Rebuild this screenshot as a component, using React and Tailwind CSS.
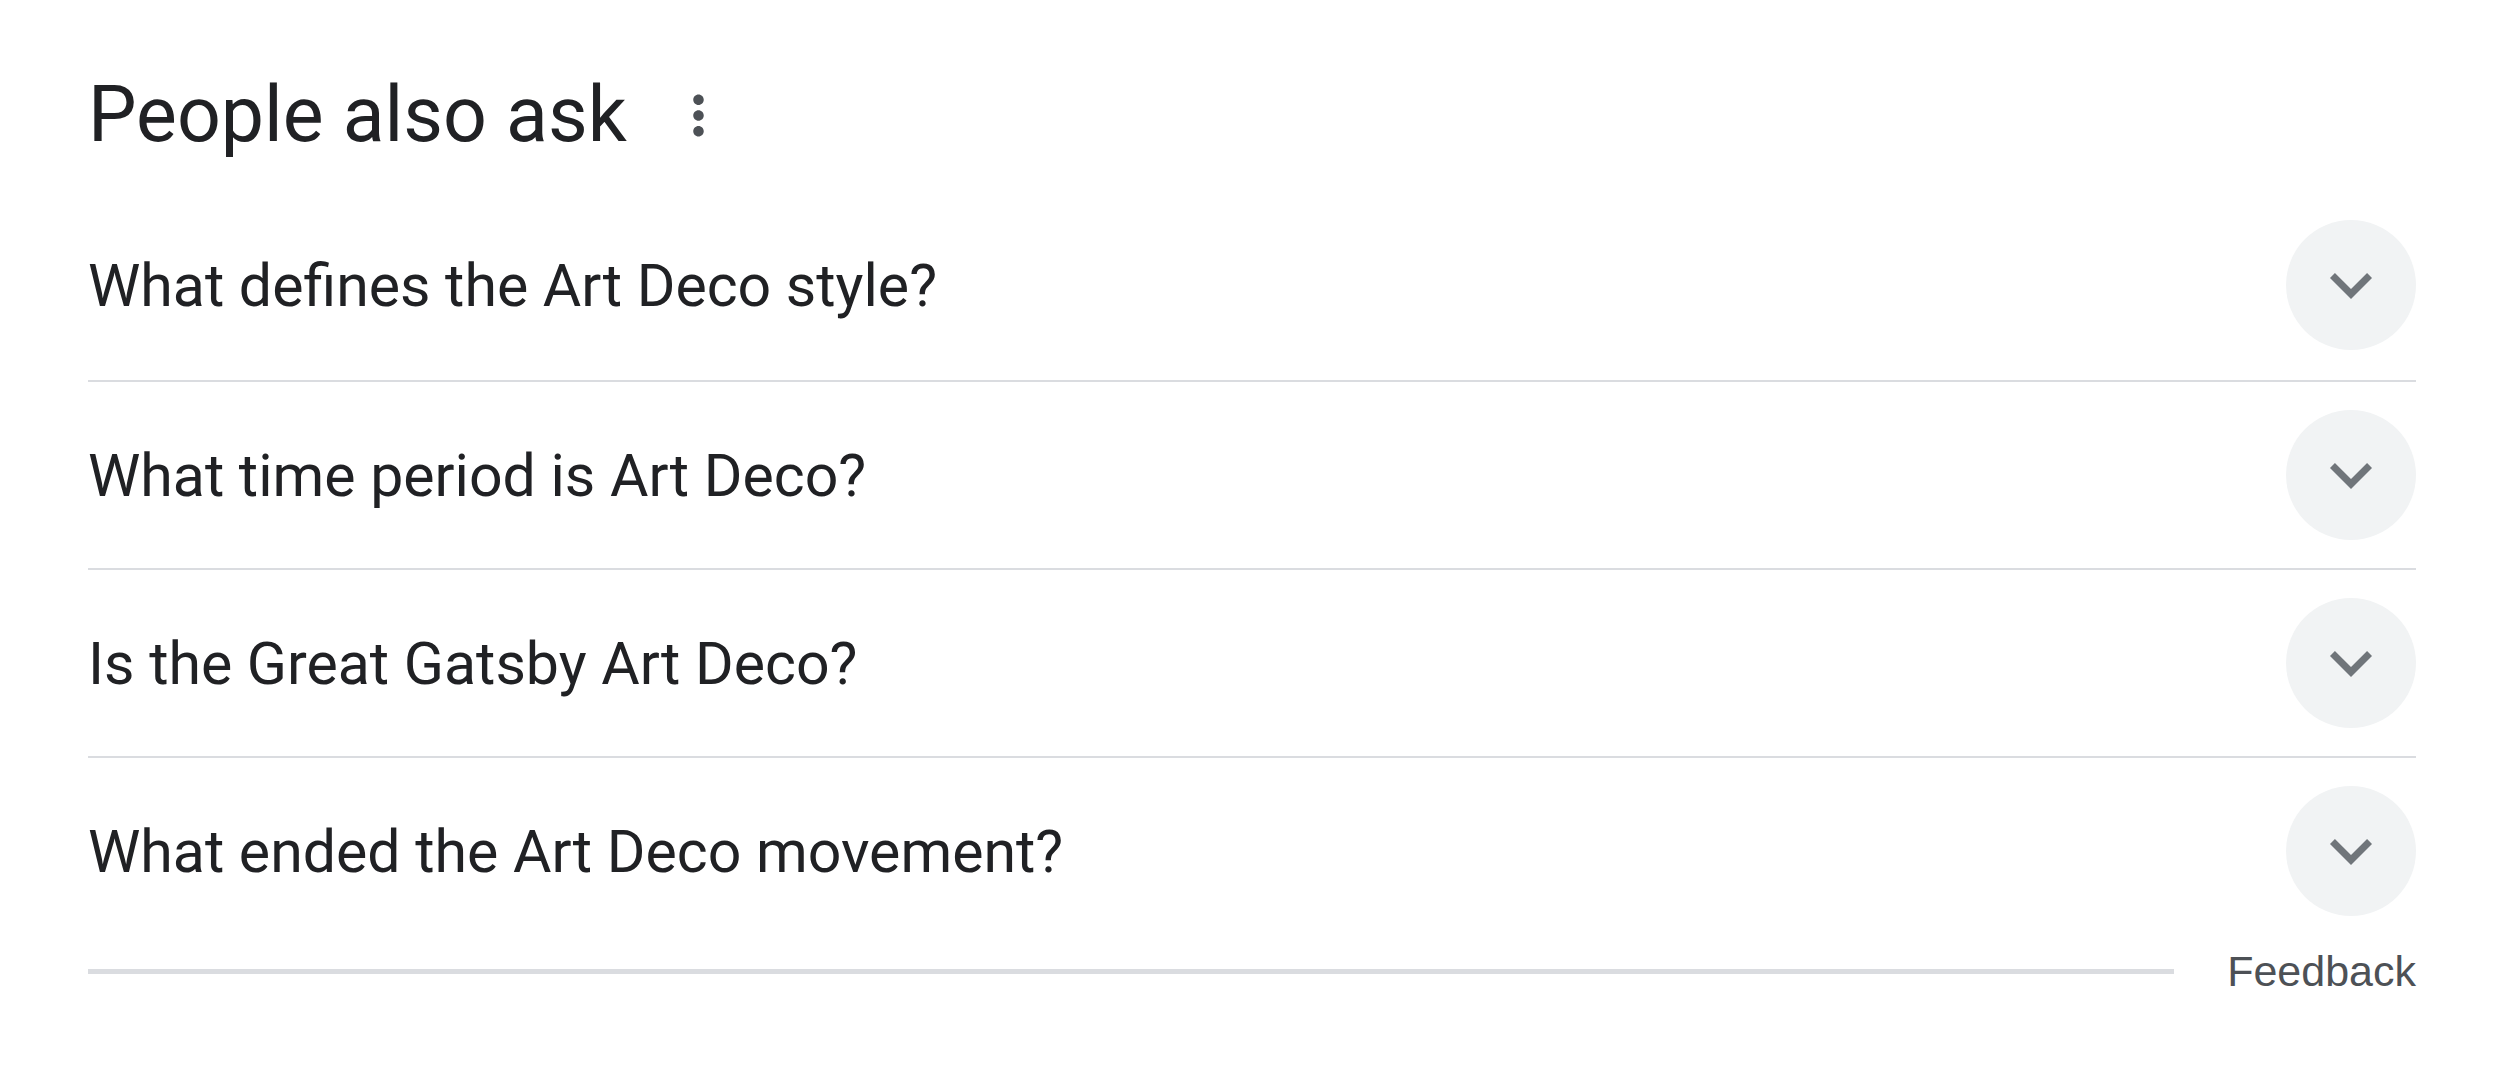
import { useState } from 'react';

const questions = [
  'What defines the Art Deco style?',
  'What time period is Art Deco?',
  'Is the Great Gatsby Art Deco?',
  'What ended the Art Deco movement?',
];

// heights of each question row, first one sits a little taller under the heading
const rowHeights = ['h-[190px]', 'h-[186px]', 'h-[186px]', 'h-[186px]'];

function MoreIcon() {
  return (
    <svg viewBox="0 0 24 24" className="w-[63px] h-[63px] fill-[#4d5156]">
      <path d="M12 8c1.1 0 2-.9 2-2s-.9-2-2-2-2 .9-2 2 .9 2 2 2zm0 2c-1.1 0-2 .9-2 2s.9 2 2 2 2-.9 2-2-.9-2-2-2zm0 6c-1.1 0-2 .9-2 2s.9 2 2 2 2-.9 2-2-.9-2-2-2z" />
    </svg>
  );
}

function ExpandIcon() {
  return (
    <svg viewBox="0 0 24 24" className="w-[84px] h-[84px] fill-[#70757a]">
      <path d="M16.59 8.59L12 13.17 7.41 8.59 6 10l6 6 6-6z" />
    </svg>
  );
}

function QuestionRow({ text, height, last }) {
  const [open, setOpen] = useState(false);
  return (
    <div>
      <div
        className={`flex items-center justify-between ${height} cursor-pointer`}
        onClick={() => setOpen(!open)}
      >
        <span className="text-[59px] leading-none text-[#202124]">{text}</span>
        <div className="w-[130px] h-[130px] rounded-full bg-[#f1f3f4] flex items-center justify-center">
          <ExpandIcon />
        </div>
      </div>
      {!last && <div className="h-[2px] bg-[#dadce0]" />}
    </div>
  );
}

export default function App() {
  return (
    <div className="bg-white w-full h-[1066px] font-['Roboto',sans-serif]">
      <div className="ml-[88px] w-[2328px] pt-[40px]">
        <div className="flex items-center h-[150px]">
          <h2 className="text-[77px] leading-none text-[#202124] font-normal">People also ask</h2>
          <div className="ml-[40px]">
            <MoreIcon />
          </div>
        </div>
        {questions.map((q, i) => (
          <QuestionRow key={q} text={q} height={rowHeights[i]} last={i === questions.length - 1} />
        ))}
        <div className="flex items-center h-[55px]">
          <div className="flex-1 h-[5px] bg-[#dadce0]" />
          <span className="ml-[53px] text-[43px] leading-none text-[#4d5156] font-['Liberation_Sans',Arial,sans-serif]">
            Feedback
          </span>
        </div>
      </div>
    </div>
  );
}
